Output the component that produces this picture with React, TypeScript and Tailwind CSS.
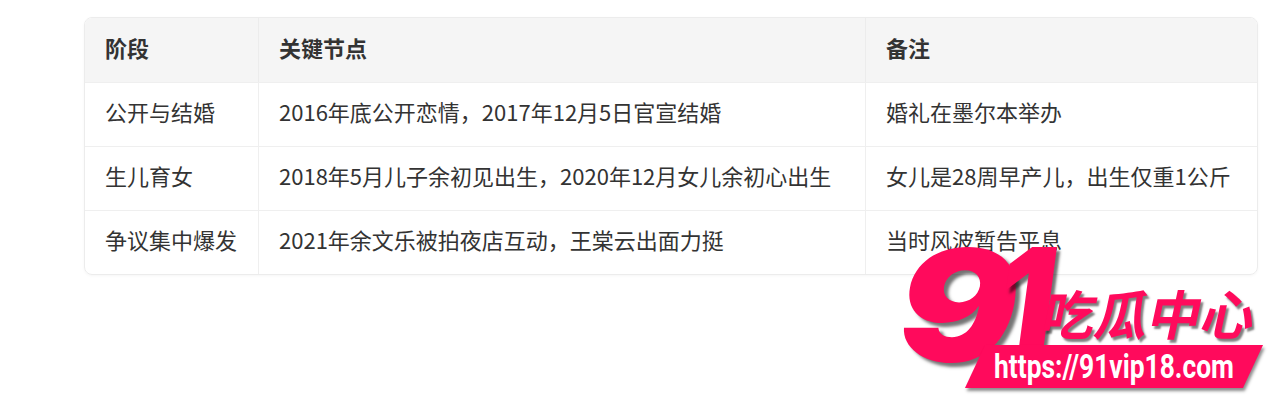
const rows = [
  ["公开与结婚", "2016年底公开恋情，2017年12月5日官宣结婚", "婚礼在墨尔本举办"],
  ["生儿育女", "2018年5月儿子余初见出生，2020年12月女儿余初心出生", "女儿是28周早产儿，出生仅重1公斤"],
  ["争议集中爆发", "2021年余文乐被拍夜店互动，王棠云出面力挺", "当时风波暂告平息"],
];

function Logo() {
  const pink = "text-[#ff0a5c]";
  return (
    <div className="absolute left-0 top-0 w-full h-full pointer-events-none">
      {/* 91 */}
      <span
        className={`absolute left-[898px] top-[228px] text-[154px] leading-none font-black italic origin-left scale-x-[1.15] ${pink} [text-shadow:4px_4px_3px_rgba(0,0,0,0.55)]`}
        style={{ fontFamily: "Inter, 'Liberation Sans', sans-serif" }}
      >
        9
      </span>
      <span
        className={`absolute left-[997px] top-[226px] text-[156px] leading-none font-black italic origin-left scale-x-[0.8] ${pink} [text-shadow:4px_4px_3px_rgba(0,0,0,0.55)]`}
        style={{ fontFamily: "Inter, 'Liberation Sans', sans-serif" }}
      >
        1
      </span>
      {/* 吃瓜中心 */}
      <span
        className={`absolute left-[1044px] top-[286px] text-[53px] leading-none font-bold ${pink} -skew-x-12 [text-shadow:3px_3px_2px_rgba(0,0,0,0.5)]`}
        style={{ fontFamily: "'Noto Sans CJK SC', sans-serif" }}
      >
        吃瓜中心
      </span>
      {/* url banner */}
      <div className="absolute left-[975px] top-[345px] w-[278px] h-[43px] bg-[#ff0a5c] -skew-x-[25deg] shadow-[3px_3px_3px_rgba(0,0,0,0.45)] flex items-center justify-center">
        <div className="skew-x-[25deg]">
          <div
            className="text-white font-bold text-[33px] leading-none scale-x-[0.8] whitespace-nowrap"
            style={{ fontFamily: "Roboto, 'Liberation Sans', sans-serif" }}
          >
            https://91vip18.com
          </div>
        </div>
      </div>
    </div>
  );
}

export default function App() {
  return (
    <div
      className="relative w-[1280px] h-[402px] bg-white overflow-hidden text-[#333]"
      style={{ fontFamily: "'Noto Sans CJK SC', 'Noto Sans', sans-serif" }}
    >
      <div className="pt-[17px] pl-[84px]">
        <div className="w-[1174px] rounded-lg border border-[#ececec] overflow-hidden shadow-[0_1px_3px_rgba(0,0,0,0.04)]">
          <div className="grid grid-cols-[174px_607px_1fr] h-[64px] bg-[#f5f5f5] font-bold text-[22px]">
            <div className="flex items-center pl-5 pb-[6px] border-r border-[#ececec]">阶段</div>
            <div className="flex items-center pl-5 pb-[6px] border-r border-[#ececec]">关键节点</div>
            <div className="flex items-center pl-5 pb-[6px]">备注</div>
          </div>
          {rows.map((r, i) => (
            <div
              key={i}
              className="grid grid-cols-[174px_607px_1fr] h-[64px] text-[22px] border-t border-[#efefef]"
            >
              <div className="flex items-center pl-5 pb-[6px] border-r border-[#efefef]">{r[0]}</div>
              <div className="flex items-center pl-5 pb-[6px] border-r border-[#efefef]">{r[1]}</div>
              <div className="flex items-center pl-5 pb-[6px]">{r[2]}</div>
            </div>
          ))}
        </div>
      </div>
      <Logo />
    </div>
  );
}
